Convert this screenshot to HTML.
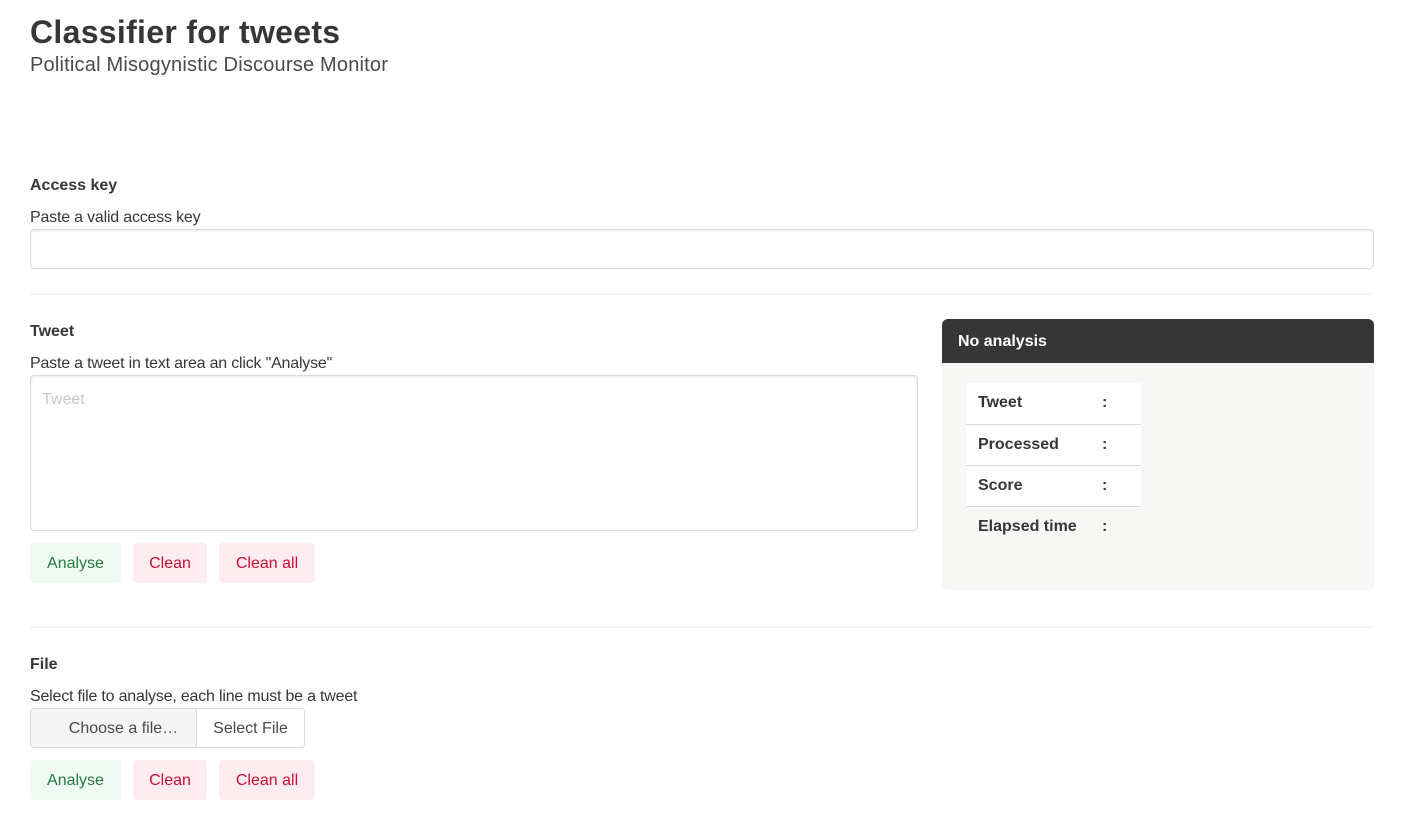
<!DOCTYPE html>
<html><head><meta charset="utf-8"><style>
*{box-sizing:border-box;margin:0;padding:0}
body{width:1411px;height:819px;background:#fff;font-family:"Liberation Sans",sans-serif;color:#363636;position:relative;overflow:hidden;font-size:16px}
.a{position:absolute;white-space:nowrap}
.b{font-weight:bold}
.t{letter-spacing:-0.2px}
.btn{position:absolute;height:40px;border-radius:4px;font-size:16px;display:flex;align-items:center;justify-content:center}
.g{background:#effaf3;color:#257942}
.r{background:#feecf0;color:#cc0f35}
.hr{position:absolute;left:30px;width:1344px;height:2px;background:#f5f5f5}
td{height:41px;font-weight:bold;font-size:16px;padding:0 12px}
</style></head><body>
<div class="a b" style="left:30px;top:13px;font-size:32px;line-height:38px;letter-spacing:0.3px">Classifier for tweets</div>
<div class="a" style="left:30px;top:53px;font-size:20px;line-height:24px;color:#4a4a4a;letter-spacing:0.2px">Political Misogynistic Discourse Monitor</div>

<div class="a b" style="left:30px;top:177px;line-height:18px">Access key</div>
<div class="a t" style="left:30px;top:209px;line-height:18px">Paste a valid access key</div>
<div class="a" style="left:30px;top:229px;width:1344px;height:40px;border:1px solid #dbdbdb;border-radius:4px;box-shadow:inset 0 1px 2px rgba(10,10,10,.1)"></div>
<div class="hr" style="top:293px"></div>

<div class="a b" style="left:30px;top:323px;line-height:18px">Tweet</div>
<div class="a t" style="left:30px;top:355px;line-height:18px">Paste a tweet in text area an click "Analyse"</div>
<div class="a" style="left:30px;top:375px;width:888px;height:156px;border:1px solid #dbdbdb;border-radius:4px;box-shadow:inset 0 1px 2px rgba(10,10,10,.1)"></div>
<div class="a" style="left:42px;top:391px;line-height:18px;color:#c8c8c8">Tweet</div>
<div class="btn g" style="left:30px;top:543px;width:91px;padding-top:2px">Analyse</div>
<div class="btn r" style="left:133px;top:543px;width:74px;padding-top:2px">Clean</div>
<div class="btn r" style="left:219px;top:543px;width:96px;padding-top:2px">Clean all</div>

<div class="a" style="left:942px;top:319px;width:432px;height:271px;background:#f7f7f6;border-radius:6px;overflow:hidden">
<div style="height:44px;background:#363636;color:#fff;font-weight:bold;padding:15px 16px;line-height:16px">No analysis</div>
<table style="position:absolute;left:24px;top:64px;border-collapse:collapse;background:#fff;width:175px">
<tr><td style="border-bottom:1px solid #dbdbdb;width:124px">Tweet</td><td style="border-bottom:1px solid #dbdbdb">:</td></tr>
<tr><td style="border-bottom:1px solid #dbdbdb">Processed</td><td style="border-bottom:1px solid #dbdbdb">:</td></tr>
<tr><td style="border-bottom:1px solid #dbdbdb">Score</td><td style="border-bottom:1px solid #dbdbdb">:</td></tr>
<tr style="background:#f7f7f6"><td>Elapsed time</td><td>:</td></tr>
</table>
</div>

<div class="hr" style="top:626px"></div>
<div class="a b" style="left:30px;top:656px;line-height:18px">File</div>
<div class="a t" style="left:30px;top:688px;line-height:18px">Select file to analyse, each line must be a tweet</div>
<div class="btn" style="left:30px;top:708px;width:167px;background:#f5f5f5;border:1px solid #dbdbdb;border-radius:4px 0 0 4px;padding-left:20px;padding-top:2px;color:#4a4a4a">Choose a file…</div>
<div class="btn" style="left:196px;top:708px;width:109px;background:#fff;border:1px solid #dbdbdb;border-radius:0 4px 4px 0;padding-top:2px;color:#4a4a4a">Select File</div>
<div class="btn g" style="left:30px;top:760px;width:91px;padding-top:2px">Analyse</div>
<div class="btn r" style="left:133px;top:760px;width:74px;padding-top:2px">Clean</div>
<div class="btn r" style="left:219px;top:760px;width:96px;padding-top:2px">Clean all</div>
</body></html>
